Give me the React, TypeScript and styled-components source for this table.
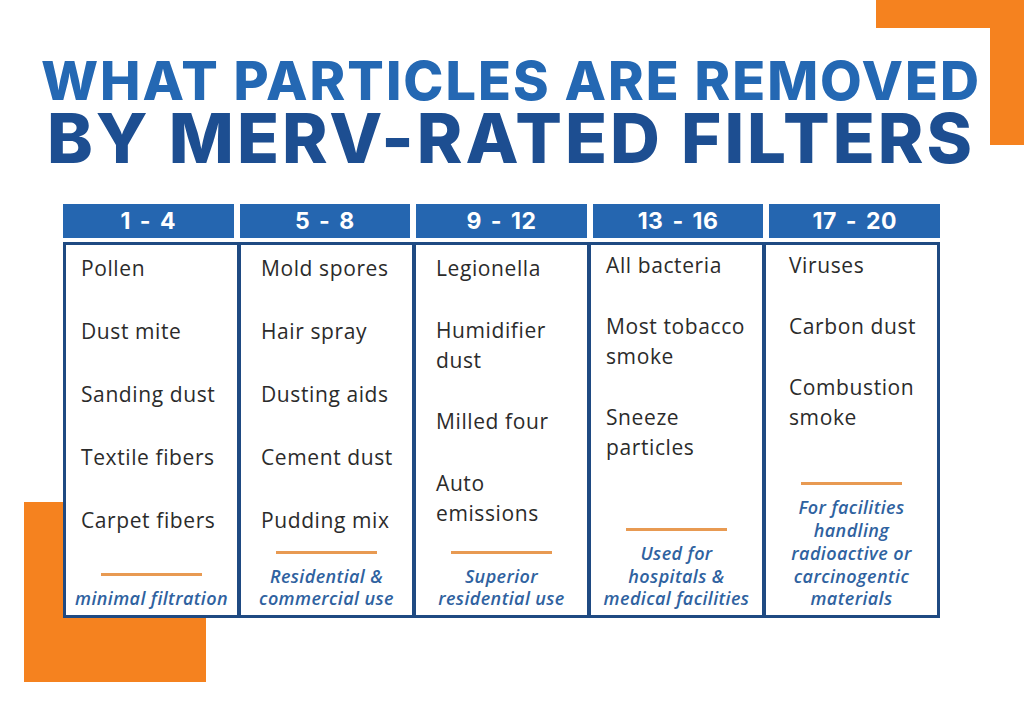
import React from "react";
import styled, { createGlobalStyle } from "styled-components";

const GlobalStyle = createGlobalStyle`
  html, body {
    margin: 0;
    padding: 0;
    background: #ffffff;
  }
  body {
    font-family: "Open Sans", "Liberation Sans", sans-serif;
  }
`;

const ORANGE = "#f5821f";
const NAVY = "#1f4a82";
const HEADER_BLUE = "#2566b0";

const Page = styled.div`
  position: relative;
  width: 1024px;
  height: 713px;
  overflow: hidden;
  background: #ffffff;
`;

const CornerTopRight = styled.div`
  position: absolute;
  top: 0;
  right: 0;
  width: 148px;
  height: 145px;
  &::before {
    content: "";
    position: absolute;
    top: 0;
    right: 0;
    width: 148px;
    height: 28px;
    background: ${ORANGE};
  }
  &::after {
    content: "";
    position: absolute;
    top: 0;
    right: 0;
    width: 34px;
    height: 145px;
    background: ${ORANGE};
  }
`;

const SquareBottomLeft = styled.div`
  position: absolute;
  left: 24px;
  top: 502px;
  width: 182px;
  height: 180px;
  background: ${ORANGE};
`;

const Content = styled.div`
  position: relative;
  display: flex;
  flex-direction: column;
  align-items: stretch;
  padding-top: 56px;
`;

const Title = styled.h1`
  margin: 0;
  display: flex;
  flex-direction: column;
  align-items: center;
  font-family: "Inter", "Open Sans", sans-serif;
  font-weight: 800;
  text-transform: uppercase;
  padding-right: 2px;
`;

const TitleLine = styled.span<{ $size: number; $lh: number; $color: string; $spacing: number; $shift?: number }>`
  display: block;
  font-size: ${(p) => p.$size}px;
  line-height: ${(p) => p.$lh}px;
  color: ${(p) => p.$color};
  letter-spacing: ${(p) => p.$spacing}px;
  margin-top: ${(p) => p.$shift ?? 0}px;
  white-space: nowrap;
`;

const Table = styled.div`
  margin: 35px 0 0 63px;
  width: 877px;
  display: flex;
  flex-direction: column;
  gap: 4px;
`;

const HeaderRow = styled.div`
  display: grid;
  grid-template-columns: repeat(5, 1fr);
  column-gap: 6px;
`;

const HeaderCell = styled.div`
  height: 34px;
  background: ${HEADER_BLUE};
  color: #ffffff;
  display: flex;
  align-items: center;
  justify-content: center;
  font-family: "Inter", "Open Sans", sans-serif;
  font-weight: 700;
  font-size: 23px;
  letter-spacing: 0.5px;
  word-spacing: 3px;
  white-space: pre;
`;

const Body = styled.div`
  height: 376px;
  box-sizing: border-box;
  background: ${NAVY};
  padding: 3px;
  display: grid;
  grid-template-columns: repeat(5, 1fr);
  column-gap: 4px;
`;

const Cell = styled.div<{ $padLeft: number; $padTop: number }>`
  background: #ffffff;
  display: flex;
  flex-direction: column;
  padding: ${(p) => p.$padTop}px 4px 5px ${(p) => p.$padLeft}px;
  min-width: 0;
`;

const Items = styled.ul<{ $gap: number }>`
  list-style: none;
  margin: 0;
  padding: 0;
  display: flex;
  flex-direction: column;
  gap: ${(p) => p.$gap}px;
`;

const Item = styled.li`
  font-family: "Open Sans", "Liberation Sans", sans-serif;
  font-size: 21px;
  line-height: 30px;
  color: #2b2b2b;
  letter-spacing: 0.6px;
  white-space: pre-line;
`;

const FooterWrap = styled.div<{ $padLeft: number }>`
  margin-top: auto;
  margin-left: ${(p) => -p.$padLeft + 4}px;
  display: flex;
  flex-direction: column;
  align-items: center;
  gap: 11px;
`;

const Rule = styled.div`
  width: 101px;
  height: 3px;
  background: #e89a52;
`;

const Note = styled.p`
  margin: 0;
  font-family: "Open Sans", "Liberation Sans", sans-serif;
  font-style: italic;
  font-weight: 600;
  font-size: 18px;
  line-height: 22.7px;
  letter-spacing: 0.4px;
  color: #2f62a0;
  text-align: center;
  white-space: pre-line;
`;

type Column = {
  range: string;
  items: string[];
  note: string;
  padLeft: number;
  padTop: number;
  gap: number;
};

const columns: Column[] = [
  {
    range: "1 - 4",
    items: ["Pollen", "Dust mite", "Sanding dust", "Textile fibers", "Carpet fibers"],
    note: "minimal filtration",
    padLeft: 15,
    padTop: 8,
    gap: 33,
  },
  {
    range: "5 - 8",
    items: ["Mold spores", "Hair spray", "Dusting aids", "Cement dust", "Pudding mix"],
    note: "Residential &\ncommercial use",
    padLeft: 20,
    padTop: 8,
    gap: 33,
  },
  {
    range: "9 - 12",
    items: ["Legionella", "Humidifier\ndust", "Milled four", "Auto\nemissions"],
    note: "Superior\nresidential use",
    padLeft: 20,
    padTop: 8,
    gap: 31.5,
  },
  {
    range: "13 - 16",
    items: ["All bacteria", "Most tobacco\nsmoke", "Sneeze\nparticles"],
    note: "Used for\nhospitals &\nmedical facilities",
    padLeft: 15,
    padTop: 5,
    gap: 31,
  },
  {
    range: "17 - 20",
    items: ["Viruses", "Carbon dust", "Combustion\nsmoke"],
    note: "For facilities\nhandling\nradioactive or\ncarcinogentic\nmaterials",
    padLeft: 23,
    padTop: 5,
    gap: 31,
  },
];

export default function App() {
  return (
    <Page>
      <GlobalStyle />
      <CornerTopRight />
      <SquareBottomLeft />
      <Content>
        <Title>
          <TitleLine $size={54} $lh={50} $color="#2468b3" $spacing={2}>
            What Particles Are Removed
          </TitleLine>
          <TitleLine $size={69} $lh={61} $color="#1d4e91" $spacing={3} $shift={2}>
            By MERV-Rated Filters
          </TitleLine>
        </Title>
        <Table>
          <HeaderRow>
            {columns.map((c) => (
              <HeaderCell key={c.range}>{c.range}</HeaderCell>
            ))}
          </HeaderRow>
          <Body>
            {columns.map((c) => (
              <Cell key={c.range} $padLeft={c.padLeft} $padTop={c.padTop}>
                <Items $gap={c.gap}>
                  {c.items.map((it) => (
                    <Item key={it}>{it}</Item>
                  ))}
                </Items>
                <FooterWrap $padLeft={c.padLeft}>
                  <Rule />
                  <Note>{c.note}</Note>
                </FooterWrap>
              </Cell>
            ))}
          </Body>
        </Table>
      </Content>
    </Page>
  );
}
